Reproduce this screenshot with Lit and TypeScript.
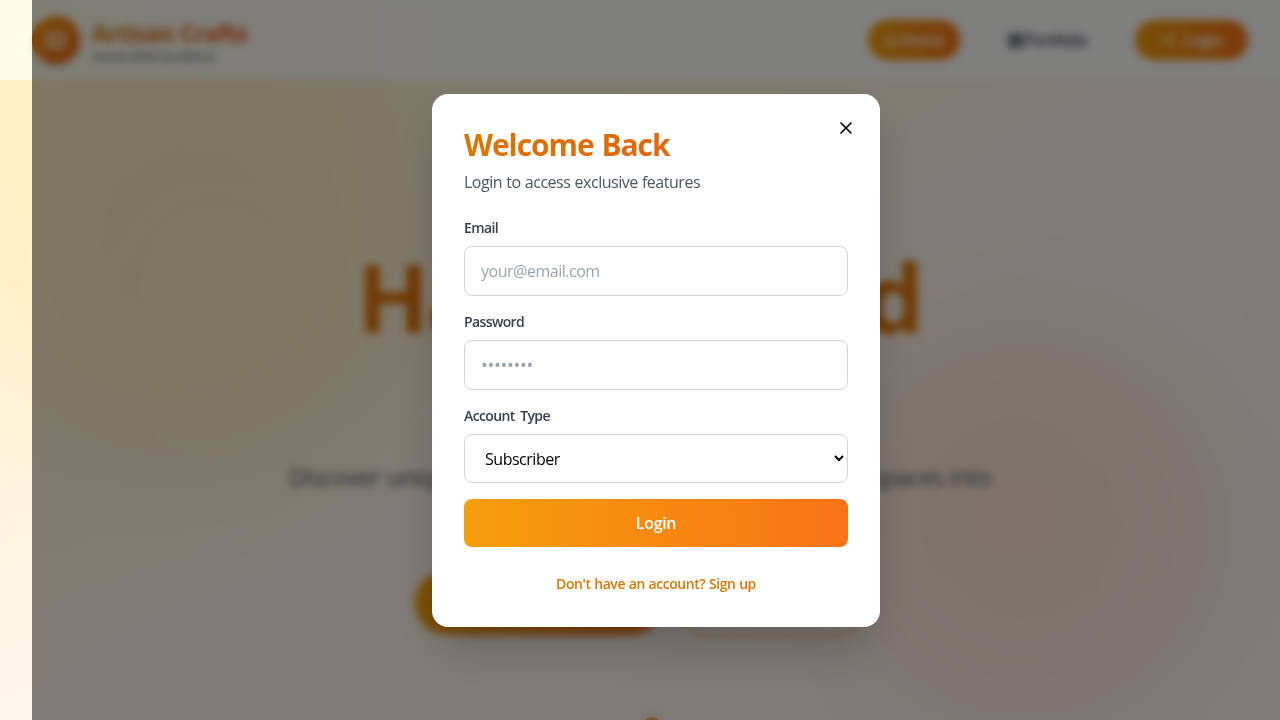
import { LitElement, html, css } from "lit";
import { customElement } from "lit/decorators.js";

@customElement("app-root")
export class AppRoot extends LitElement {
  static styles = css`
    :host {
      display: block;
      position: relative;
      width: 1280px;
      height: 720px;
      overflow: hidden;
      font: 16px/24px "Open Sans", "Noto Sans", sans-serif;
      letter-spacing: -0.48px;
      word-spacing: 0.5px;
      color: #4b5563;
    }
    * { box-sizing: border-box; }
    .page {
      height: 100%;
      display: flex;
      flex-direction: column;
      background: linear-gradient(to bottom right, #ffefc0, #fff7ed 50%, #fff4f0);
    }
    .bar {
      height: 80px;
      flex: none;
      display: flex;
      align-items: center;
      justify-content: space-between;
      padding: 0 32px;
      background: linear-gradient(to right, #fffceb, #fffefc 40%, #fffefd);
      position: relative;
      z-index: 1;
    }
    .brand { display: flex; align-items: center; gap: 12px; }
    .logo {
      width: 48px; height: 48px; border-radius: 50%;
      display: flex; align-items: center; justify-content: center;
      background: linear-gradient(to bottom right, #f59e0b, #ea580c);
      box-shadow: 0 4px 6px rgba(0, 0, 0, 0.1);
    }
    .name {
      font-size: 24px; line-height: 32px; font-weight: 700; letter-spacing: -0.79px;
      margin-top: 2px;
      background: linear-gradient(to right, #d97706, #ea4a0c);
      -webkit-background-clip: text; color: transparent;
    }
    .tag { font-size: 12px; line-height: 16px; letter-spacing: -0.36px; }
    .nav { display: flex; gap: 32px; }
    .link {
      height: 40px; border-radius: 20px;
      display: flex; align-items: center; justify-content: center; gap: 2px;
      font-weight: 600; color: #374151;
    }
    .home { width: 92px; }
    .portfolio { width: 111px; }
    .login { width: 113px; gap: 8px; }
    .lit { background: linear-gradient(to right, #f59e0b, #f97316); color: #fff; }
    .hero {
      flex: 1; position: relative;
      display: flex; flex-direction: column; align-items: center;
      padding-top: 168px;
    }
    .orb { position: absolute; width: 384px; height: 384px; border-radius: 50%; filter: blur(64px); }
    .gold { left: 24px; top: 10px; background: rgba(252, 211, 77, 0.16); }
    .rose { left: 828px; top: 250px; background: rgba(253, 155, 110, 0.16); }
    h1 {
      margin: 0; font-size: 95px; line-height: 96px; font-weight: 700; text-align: center;
      letter-spacing: -2.9px;
      background: linear-gradient(to right, #e07808, #ea580c 50%, #e07808);
      -webkit-background-clip: text; color: transparent; position: relative; left: -1px;
    }
    .lead {
      margin: 21px 0 0; font-size: 24px; line-height: 32px; letter-spacing: -0.62px;
      text-align: center; position: relative;
    }
    .actions { display: flex; gap: 16px; margin-top: 46px; position: relative; }
    .cta { height: 64px; border-radius: 32px; width: 248px; }
    .ghost { width: 186px; border: 2px solid #f2b040; background: rgba(255, 255, 255, 0.5); position: relative; top: 2px; }
    .scroll { margin-top: 82px; margin-left: 24px; flex: none; width: 18px; height: 18px; border-radius: 50%; background: #ea7c0c; }
    .overlay {
      position: absolute; inset: 0 0 0 32px; z-index: 2;
      display: flex; align-items: center; justify-content: center;
      background: rgba(0, 0, 0, 0.5);
      backdrop-filter: blur(4px);
    }
    .modal {
      position: relative; top: 0.5px; width: 448px; height: 533px; padding: 32px;
      background: #fff; border-radius: 16px;
      box-shadow: 0 25px 50px -12px rgba(0, 0, 0, 0.25);
    }
    .close { position: absolute; right: 24px; top: 24px; width: 20px; height: 20px; }
    h2 {
      margin: 0 0 7px; padding-top: 1px; font-size: 30px; line-height: 36px; font-weight: 700;
      letter-spacing: -1.06px; word-spacing: 1px;
      background: linear-gradient(to right, #d97706, #ea580c);
      -webkit-background-clip: text; color: transparent;
    }
    .sub { margin: 0 0 24px; }
    .form { display: flex; flex-direction: column; gap: 16px; }
    .field { display: flex; flex-direction: column; gap: 8px; }
    label { font-size: 14px; line-height: 20px; font-weight: 600; letter-spacing: -0.62px; word-spacing: 2.5px; color: #374151; }
    input, select {
      font: inherit; letter-spacing: inherit; width: 100%; height: 50px; padding: 12px 16px;
      border: 1px solid #d1d5db; border-radius: 8px; background: #fff; color: #000; outline: none;
    }
    select { height: 49px; }
    input::placeholder { color: #9ca3af; }
    .secret { font-size: 18px; letter-spacing: -0.28px; }
    .submit {
      font: inherit; font-weight: 600; letter-spacing: -0.3px; height: 48px; border: 0; border-radius: 8px; color: #fff;
      background: linear-gradient(to right, #f59e0b, #f97316);
    }
    .signup {
      margin-top: 25px; text-align: center; font-size: 14px; font-weight: 600;
      letter-spacing: -0.44px; color: #d97706;
    }
  `;

  render() {
    return html`
      <div class="page">
        <header class="bar">
          <div class="brand">
            <div class="logo">
              <svg width="24" height="24" viewBox="0 0 24 24" fill="none" stroke="#fff" stroke-width="2"><path d="M3 10h18v10H3zM3 10l2-6h14l2 6M9 20v-6h6v6"/></svg>
            </div>
            <div><div class="name">Artisan Crafts</div><div class="tag">Handcrafted Excellence</div></div>
          </div>
          <nav class="nav">
            <div class="link home lit"><svg width="14" height="14" viewBox="0 0 24 24" fill="none" stroke="currentColor" stroke-width="2"><path d="M3 10l9-7 9 7v11H3zM9 21v-9h6v9"/></svg>Home</div>
            <div class="link portfolio"><svg width="15" height="15" viewBox="0 0 24 24" fill="none" stroke="currentColor" stroke-width="4"><path d="M3 3h18v18H3zM12 3v18M3 12h18"/></svg>Portfolio</div>
            <div class="link login lit"><svg width="16" height="16" viewBox="0 0 24 24" fill="none" stroke="currentColor" stroke-width="2"><path d="M15 3h5v18h-5M10 17l5-5-5-5M15 12H3"/></svg>Login</div>
          </nav>
        </header>
        <main class="hero">
          <div class="orb gold"></div>
          <div class="orb rose"></div>
          <h1>Handcrafted<br>Wonders</h1>
          <p class="lead">Discover unique handcrafted treasures that transform spaces into<br>works of art</p>
          <div class="actions"><div class="cta lit"></div><div class="cta ghost"></div></div>
          <div class="scroll"></div>
        </main>
      </div>
      <div class="overlay">
        <div class="modal">
          <svg class="close" viewBox="0 0 20 20" fill="none" stroke="#000" stroke-width="1.67" stroke-linecap="round"><path d="M5 5l10 10M15 5L5 15"/></svg>
          <h2>Welcome Back</h2>
          <p class="sub">Login to access exclusive features</p>
          <div class="form">
            <div class="field"><label>Email</label><input type="email" placeholder="your@email.com"></div>
            <div class="field"><label>Password</label><input class="secret" type="password" placeholder="••••••••"></div>
            <div class="field"><label>Account Type</label><select><option>Subscriber</option></select></div>
            <button class="submit">Login</button>
          </div>
          <div class="signup">Don't have an account? Sign up</div>
        </div>
      </div>
    `;
  }
}
